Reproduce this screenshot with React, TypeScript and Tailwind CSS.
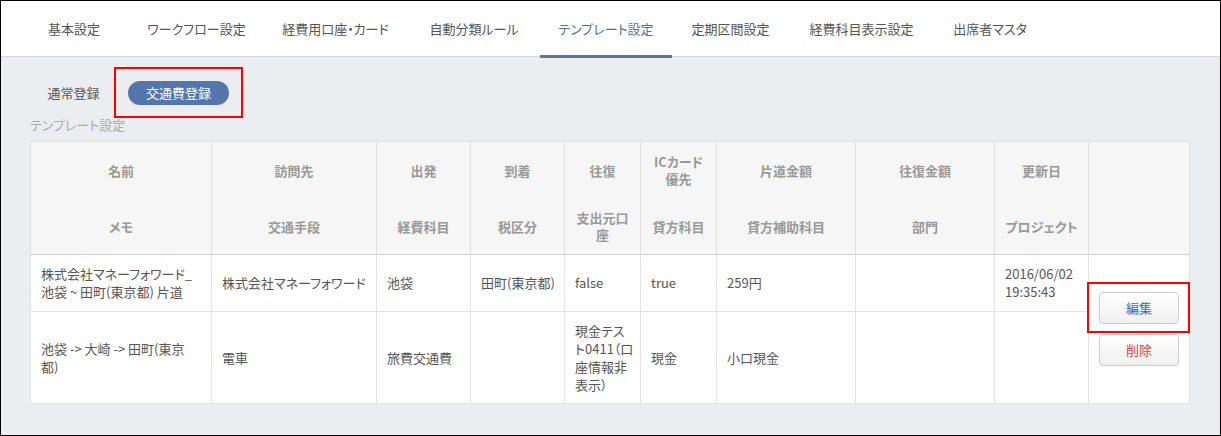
import React from "react";

const tabs = [
  { label: "基本設定", w: "w-[88px]", ml: "ml-[29px]" },
  { label: "ワークフロー設定", w: "w-[131px]", ml: "ml-[13px]" },
  { label: "経費用口座・カード", w: "w-[137px]", ml: "ml-[5px]" },
  { label: "自動分類ルール", w: "w-[124px]", ml: "ml-[8px]" },
  { label: "テンプレート設定", w: "w-[132px]", ml: "ml-[4px]", active: true },
  { label: "定期区間設定", w: "w-[113px]", ml: "ml-[2px]" },
  { label: "経費科目表示設定", w: "w-[139px]", ml: "ml-[5px]" },
  { label: "出席者マスタ", w: "w-[108px]", ml: "ml-[5px]" },
];

const headers: { top: React.ReactNode; bottom: React.ReactNode; w: string }[] = [
  { top: "名前", bottom: "メモ", w: "w-[181px]" },
  { top: "訪問先", bottom: "交通手段", w: "w-[165px]" },
  { top: "出発", bottom: "経費科目", w: "w-[94px]" },
  { top: "到着", bottom: "税区分", w: "w-[94px]" },
  {
    top: "往復",
    bottom: (
      <>
        支出元口
        <br />座
      </>
    ),
    w: "w-[76px]",
  },
  {
    top: (
      <>
        ICカード
        <br />優先
      </>
    ),
    bottom: "貸方科目",
    w: "w-[76px]",
  },
  { top: "片道金額", bottom: "貸方補助科目", w: "w-[139px]" },
  { top: "往復金額", bottom: "部門", w: "w-[139px]" },
  { top: "更新日", bottom: "プロジェクト", w: "w-[94px]" },
  { top: "", bottom: "", w: "w-[101px]" },
];

const td = "border border-[#e3e3e3] px-[10px] align-middle text-left whitespace-nowrap";

export default function App() {
  return (
    <div className="w-[1221px] h-[436px] overflow-hidden border border-black bg-[#ecedf1] text-[13px] text-[#555] [font-family:'Noto_Sans_CJK_JP','Liberation_Sans',sans-serif] [font-feature-settings:'palt']">
      {/* tabs */}
      <div className="flex h-[56px] border-b border-[#d6d6d6] bg-white">
        {tabs.map((t) => (
          <div
            key={t.label}
            className={`relative flex shrink-0 items-center justify-center whitespace-nowrap ${t.w} ${t.ml} ${
              t.active ? "text-[#4f71aa]" : "text-[#555]"
            }`}
          >
            {t.label}
            {t.active && (
              <span className="absolute bottom-[-2px] left-0 right-0 h-[3px] bg-[#5576ad]" />
            )}
          </div>
        ))}
      </div>

      <div className="px-[29px] pt-[24px]">
        {/* sub tabs */}
        <div className="flex h-[24px] items-center">
          <div className="flex h-[24px] w-[87px] items-center justify-center text-[#555]">
            通常登録
          </div>
          <div className="relative ml-[11px]">
            <div className="flex h-[24px] w-[101px] items-center justify-center rounded-full bg-[#5576ad] text-white">
              交通費登録
            </div>
            <span className="pointer-events-none absolute -left-[14px] -right-[14px] -top-[14px] -bottom-[13px] border-2 border-[#f00]" />
          </div>
        </div>

        <div className="mt-[11px] h-[18px] leading-[18px] text-[#aaa]">テンプレート設定</div>

        <table className="mt-[7px] w-[1160px] table-fixed border-collapse border border-[#d0d0d0] bg-white">
          <colgroup>
            {headers.map((h, i) => (
              <col key={i} className={h.w} />
            ))}
          </colgroup>
          <thead>
            <tr className="bg-[#f6f6f6]">
              {headers.map((h, i) => (
                <th
                  key={i}
                  className="border border-[#e0e0e0] border-b-[#cfcfcf] p-0 text-center font-bold text-[#999] leading-[17px]"
                >
                  <div className="flex h-[56px] items-center justify-center">{h.top}</div>
                  <div className="flex h-[56px] items-center justify-center">{h.bottom}</div>
                </th>
              ))}
            </tr>
          </thead>
          <tbody className="leading-[18px]">
            <tr className="h-[57px]">
              <td className={td}>
                株式会社マネーフォワード_
                <br />
                池袋 ~ 田町(東京都) 片道
              </td>
              <td className={td}>株式会社マネーフォワード</td>
              <td className={td}>池袋</td>
              <td className={td}>田町(東京都)</td>
              <td className={td}>false</td>
              <td className={td}>true</td>
              <td className={td}>259円</td>
              <td className={td}></td>
              <td className={td}>
                2016/06/02
                <br />
                19:35:43
              </td>
              <td rowSpan={2} className="border border-[#e3e3e3] p-0 align-middle">
                <div className="flex flex-col items-center gap-[10px]">
                  <div className="relative">
                    <button className="flex h-[32px] w-[80px] items-center justify-center rounded-[4px] border border-[#cccccc] bg-gradient-to-b from-white to-[#f0f0f0] text-[#3f6bb5]">
                      編集
                    </button>
                    <span className="pointer-events-none absolute -left-[12px] -right-[11px] -top-[10px] -bottom-[9px] border-2 border-[#f00]" />
                  </div>
                  <button className="flex h-[32px] w-[80px] items-center justify-center rounded-[4px] border border-[#cccccc] bg-gradient-to-b from-white to-[#f0f0f0] text-[#d9453b]">
                    削除
                  </button>
                </div>
              </td>
            </tr>
            <tr className="h-[92px]">
              <td className={td}>
                池袋 -&gt; 大崎 -&gt; 田町(東京
                <br />
                都)
              </td>
              <td className={td}>電車</td>
              <td className={td}>旅費交通費</td>
              <td className={td}></td>
              <td className={td}>
                現金テス
                <br />
                ト0411（口
                <br />
                座情報非
                <br />
                表示）
              </td>
              <td className={td}>現金</td>
              <td className={td}>小口現金</td>
              <td className={td}></td>
              <td className={td}></td>
            </tr>
          </tbody>
        </table>
      </div>
    </div>
  );
}
